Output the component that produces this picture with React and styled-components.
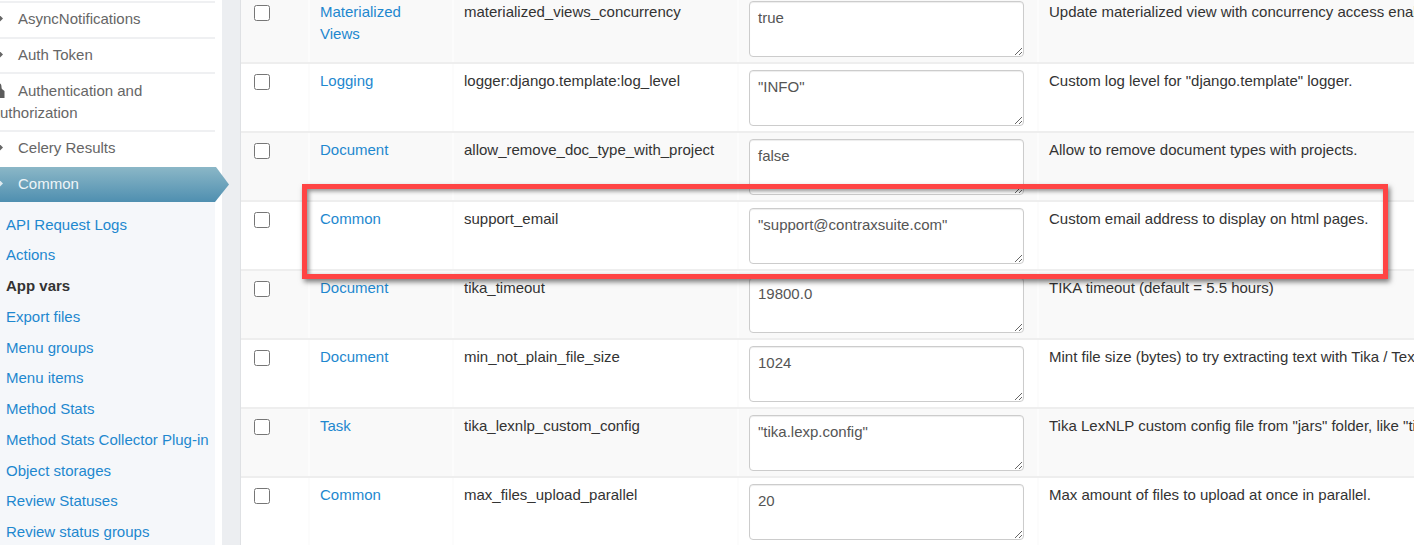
import React from "react";
import styled, { createGlobalStyle } from "styled-components";

const GlobalStyle = createGlobalStyle`
  html, body {
    margin: 0;
    padding: 0;
    background: #fff;
    overflow: hidden;
  }
  body {
    font-family: "Liberation Sans", Arial, sans-serif;
    font-size: 15px;
    line-height: 22px;
    color: #333;
  }
`;

const Page = styled.div`
  display: flex;
  width: 1414px;
  height: 545px;
  overflow: hidden;
`;

// Sidebar runs past the left edge of the crop
const Sidebar = styled.aside`
  flex: none;
  width: 225px;
  margin-left: -10px;
  margin-right: 7px;
  padding-top: 1px;
  color: #666;
`;

const NavItem = styled.div`
  box-sizing: border-box;
  border-top: 2px solid #eff0f2;
  padding-top: ${(p) => p.$top}px;
  height: ${(p) => p.$h}px;
`;

const ActiveItem = styled.div`
  position: relative;
  z-index: 2;
  box-sizing: border-box;
  width: 239px;
  height: 35px;
  padding-top: 6px;
  color: #eef5f8;
  background: linear-gradient(#8bb7c7, #4f8fb0);
  clip-path: polygon(0 0, 226px 0, 100% 50%, 225px 100%, 0 100%);
`;

const NavIcon = styled.svg`
  display: inline-block;
  vertical-align: ${(p) => p.$align || "2px"};
  margin-left: ${(p) => p.$left}px;
  margin-right: ${(p) => p.$right}px;
`;

const Caret = ({ color = "#666" }) => (
  <NavIcon $left={6} $right={15} width="7" height="7" viewBox="0 0 7 7">
    <path d="M3.5 0 L7 3.5 L3.5 7 L0 3.5 Z" fill={color} />
  </NavIcon>
);

const SubMenu = styled.div`
  background: #f5f7fa;
  padding: 7.75px 0 0 16px;
  height: 345px;
`;

const SubLink = styled.div`
  height: 30.72px;
  line-height: 30.72px;
  white-space: nowrap;
  color: ${(p) => (p.$current ? "#333" : "#1e88cf")};
  font-weight: ${(p) => (p.$current ? 700 : 400)};
`;

const Gutter = styled.div`
  flex: none;
  width: 18px;
  background: #eceef1;
  border-right: 1px solid #dfe1e4;
`;

const Table = styled.main`
  flex: 1;
  margin-top: -5px;
  min-width: 0;
`;

const Row = styled.div`
  display: grid;
  grid-template-columns: 67px 144px 285px 300px 1fr;
  box-sizing: border-box;
  height: 69px;
  border-bottom: 2px solid #eeeeee;
  background: ${(p) => (p.$zebra ? "#f9f9f9" : "#fff")};
`;

const Cell = styled.div`
  box-sizing: border-box;
  padding: 6px 12px 0 10px;
  white-space: ${(p) => (p.$wrap ? "normal" : "nowrap")};
  border-left: 2px solid #fcfcfc;
  min-width: 0;
`;

const CheckCell = styled.div`
  padding: 10px 0 0 13px;
`;

const Check = styled.input.attrs({ type: "checkbox" })`
  display: block;
  width: 16px;
  height: 16px;
  margin: 0;
`;

const CategoryLink = styled.a`
  color: #1e88cf;
  text-decoration: none;
`;

const ValueBox = styled.textarea`
  display: block;
  box-sizing: border-box;
  width: 275px;
  height: 56px;
  margin: 0;
  padding: 5px 8px;
  border: 1px solid #ccc;
  border-radius: 4px;
  box-shadow: inset 0 1px 1px rgba(0, 0, 0, 0.075);
  color: #555;
  background: #fff;
  font-family: "Liberation Sans", Arial, sans-serif;
  font-size: 15px;
  line-height: 21.4px;
  outline: none;
`;

const Highlight = styled.div`
  position: absolute;
  left: 302px;
  top: 184px;
  width: 1086px;
  height: 95px;
  box-sizing: border-box;
  border: 5px solid #ff4444;
  box-shadow: 2px 3px 5px rgba(0, 0, 0, 0.5), inset 2px 2px 4px rgba(0, 0, 0, 0.45);
  pointer-events: none;
`;

const links = [
  "API Request Logs",
  "Actions",
  "App vars",
  "Export files",
  "Menu groups",
  "Menu items",
  "Method Stats",
  "Method Stats Collector Plug-in",
  "Object storages",
  "Review Statuses",
  "Review status groups",
];

const rows = [
  ["Materialized Views", "materialized_views_concurrency", "true", "Update materialized view with concurrency access enabled."],
  ["Logging", "logger:django.template:log_level", '"INFO"', 'Custom log level for "django.template" logger.'],
  ["Document", "allow_remove_doc_type_with_project", "false", "Allow to remove document types with projects."],
  ["Common", "support_email", '"support@contraxsuite.com"', "Custom email address to display on html pages."],
  ["Document", "tika_timeout", "19800.0", "TIKA timeout (default = 5.5 hours)"],
  ["Document", "min_not_plain_file_size", "1024", "Mint file size (bytes) to try extracting text with Tika / Textract."],
  ["Task", "tika_lexnlp_custom_config", '"tika.lexp.config"', 'Tika LexNLP custom config file from "jars" folder, like "tika.lexp.config".'],
  ["Common", "max_files_upload_parallel", "20", "Max amount of files to upload at once in parallel."],
];

export default function App() {
  return (
    <>
      <GlobalStyle />
      <Page>
        <Sidebar>
          <NavItem $h={36} $top={5}>
            <Caret />
            AsyncNotifications
          </NavItem>
          <NavItem $h={35} $top={5}>
            <Caret />
            Auth Token
          </NavItem>
          <NavItem $h={58} $top={6}>
            <NavIcon $left={1} $right={13} $align="-2px" width="14" height="15" viewBox="0 0 14 15">
              <path d="M7 0 C9.5 0 10.5 1.5 10.5 4 C10.5 5.5 11 6 11.5 6.5 L13.5 8 V15 H0.5 V8 L2.5 6.5 C3 6 3.5 5.5 3.5 4 C3.5 1.5 4.5 0 7 0 Z" fill="#5c5c5c" />
            </NavIcon>
            Authentication and Authorization
          </NavItem>
          <NavItem $h={37} $top={5}>
            <Caret />
            Celery Results
          </NavItem>
          <ActiveItem>
            <Caret color="#dfeaef" />
            Common
          </ActiveItem>
          <SubMenu>
            {links.map((label) => (
              <SubLink key={label} $current={label === "App vars"}>
                {label}
              </SubLink>
            ))}
          </SubMenu>
        </Sidebar>
        <Gutter />
        <Table>
          {rows.map(([category, name, value, description], i) => (
            <Row key={name} $zebra={i % 2 === 0}>
              <CheckCell>
                <Check />
              </CheckCell>
              <Cell $wrap>
                <CategoryLink href="#">{category}</CategoryLink>
              </Cell>
              <Cell>{name}</Cell>
              <Cell>
                <ValueBox defaultValue={value} />
              </Cell>
              <Cell>{description}</Cell>
            </Row>
          ))}
        </Table>
        <Highlight />
      </Page>
    </>
  );
}
